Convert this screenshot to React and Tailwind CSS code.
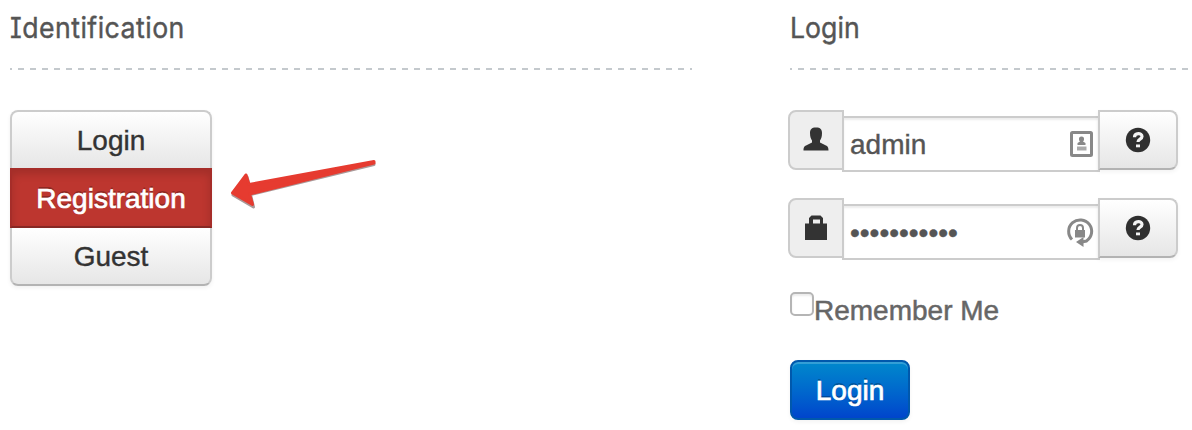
import React, { useState } from "react";

const Heading = ({ children, className, textClass }) => (
  <div className={className}>
    <h3 className="h-[68px] pt-[10px] font-['Inter'] text-[29px] leading-9 text-[#555] [-webkit-text-stroke:0.4px_#555] [font-feature-settings:'cv08']">
      <span className={`inline-block origin-left scale-x-[0.92] ${textClass}`}>
        {children}
      </span>
    </h3>
    <div className="h-[2px] bg-[repeating-linear-gradient(90deg,#c4c9cd_0_6px,transparent_6px_12px)] bg-[position:-4px_0] bg-[length:12px_2px]" />
  </div>
);

const UserIcon = () => (
  <svg width="26" height="28" viewBox="0 0 26 28" fill="#333">
    <path d="M13 1.500c4.500 0 6 2 6 5.500 0 4-1 6-2 7.500v2l5 2.500c2.500 1 3.500 2 3.500 5.500H.5C.5 21 1.500 20 4 19l5-2.500v-2C8 13 7 11 7 7c0-3.500 1.500-5.500 6-5.500z" />
  </svg>
);

const LockIcon = () => (
  <svg width="26" height="28" viewBox="0 0 26 28" fill="#333">
    <path
      d="M2 9.500h4V4l2.500-2.500h9L20 4v5.500h4V26H2zM10 9.500h7V5.500h-7z"
      fillRule="evenodd"
    />
  </svg>
);

const HelpIcon = () => (
  <svg width="26" height="26" viewBox="0 0 26 26">
    <circle cx="13" cy="13" r="12.200" fill="#303030" />
    <path
      d="M9.500 10.200c0-4.700 7.500-4.700 7.500-.700 0 2.800-4 2.500-4 5.500"
      fill="none"
      stroke="#f4f4f4"
      strokeWidth="3.200"
    />
    <path d="M11 17.500h4v2.800h-4z" fill="#f4f4f4" />
  </svg>
);

const CardIcon = () => (
  <svg className="shrink-0" width="24" height="28" viewBox="0 0 24 28">
    <rect x="1.500" y="2.500" width="20" height="23" rx="1" fill="none" stroke="#888" strokeWidth="3" />
    <path
      d="M11.500 6.500c2 0 2.500 1 2.500 2.500s-.5 2-1 2.500l2.500 1.500v2h-8v-2l2.500-1.500c-.5-.5-1-1-1-2.500s.5-2.500 2.500-2.500z"
      fill="#888"
    />
    <path d="M7 16.500h9.500v4H7z" fill="#aaa" />
  </svg>
);

const LockResetIcon = () => (
  <svg className="shrink-0" width="28" height="32" viewBox="0 0 28 32">
    <path d="M6 23.500A11.500 11.500 0 1 1 20.500 25l-5 1" fill="none" stroke="#888" strokeWidth="3" />
    <path d="M10 26l7.500-5v10z" fill="#888" />
    <path d="M9 14h10v7.500H9z" fill="#888" />
    <path d="M11 15v-3c0-4 6-4 6 0v3" fill="none" stroke="#888" strokeWidth="2" />
  </svg>
);

const Arrow = () => (
  <svg className="ml-[18px] mt-[46px]" width="150" height="54" viewBox="0 0 150 54">
    <g strokeLinejoin="round" strokeWidth="3">
      <path d="M144 7.500L19.500 30.500 17 21 3 39l20.500 12-3-12.500L144 8.500z" fill="#a99" stroke="#a99" />
      <path d="M144 5.500L19 28.500 16 19 2.500 37l20 11.500-3-10.500L144 7z" fill="#e63b30" stroke="#e63b30" />
    </g>
  </svg>
);

const Field = ({ icon, hint, type, value, onChange }) => (
  <div className="flex h-[62px] items-start">
    <span className="flex h-[60px] w-14 shrink-0 items-center justify-center rounded-l-lg border-2 border-[#ccc] bg-[#eee]">
      {icon}
    </span>
    <div className="-ml-[2px] mt-[6px] flex h-14 w-[258px] shrink-0 items-center border-2 border-[#ccc] bg-white pl-[6px] pr-1 shadow-[inset_0_2px_2px_rgba(0,0,0,0.075)]">
      <input
        type={type}
        value={value}
        onChange={onChange}
        className="w-full min-w-0 bg-transparent pt-px text-[28px] leading-10 text-[#555] outline-none [-webkit-text-stroke:0.4px_#555]"
      />
      {hint}
    </div>
    <button
      type="button"
      className="-ml-[2px] flex h-[60px] w-20 shrink-0 items-center justify-center rounded-r-lg border-2 border-[#ccc] border-b-[#b3b3b3] bg-linear-to-b from-white to-[#e6e6e6] shadow-[0_2px_4px_rgba(0,0,0,0.05)]"
    >
      <HelpIcon />
    </button>
  </div>
);

export default function App() {
  const [username, setUsername] = useState("admin");
  const [password, setPassword] = useState("password123");

  return (
    <div className="flex h-[430px] w-[1192px] overflow-hidden bg-white font-['Liberation_Sans',sans-serif]">
      <div className="w-[780px] pl-[10px]">
        <Heading className="w-[682px]" textClass="tracking-[0.5px]">
          Identification
        </Heading>
        <div className="flex pt-10">
          <div className="flex h-44 w-[202px] flex-col rounded-lg text-[28px] leading-10 text-[#333] shadow-[0_2px_4px_rgba(0,0,0,0.06)]">
            <button className="h-[58px] rounded-t-lg border-2 border-b-0 border-[#ccc] bg-linear-to-b from-white to-[#e6e6e6] pt-[2px] [-webkit-text-stroke:0.4px_#333]">
              Login
            </button>
            <button className="h-[60px] border-2 border-[#a62d29] border-b-[#872824] bg-[#bd362f] pt-[2px] text-white shadow-[inset_0_4px_8px_rgba(0,0,0,0.15)] [-webkit-text-stroke:0.7px_white] [text-shadow:0_-2px_0_rgba(0,0,0,0.25)]">
              Registration
            </button>
            <button className="h-[58px] rounded-b-lg border-2 border-t-0 border-[#ccc] border-b-[#b3b3b3] bg-linear-to-b from-white to-[#e6e6e6] pt-[2px] [-webkit-text-stroke:0.4px_#333]">
              Guest
            </button>
          </div>
          <Arrow />
        </div>
      </div>

      <div className="w-[412px]">
        <Heading className="ml-[10px] w-[398px]" textClass="tracking-normal">
          Login
        </Heading>
        <form className="flex flex-col pl-2 pt-10">
          <Field
            icon={<UserIcon />}
            hint={<CardIcon />}
            type="text"
            value={username}
            onChange={(e) => setUsername(e.target.value)}
          />
          <div className="mt-[26px]">
            <Field
              icon={<LockIcon />}
              hint={<LockResetIcon />}
              type="password"
              value={password}
              onChange={(e) => setPassword(e.target.value)}
            />
          </div>
          <label className="ml-[2px] mt-8 flex h-9 items-start text-[28px] leading-9 text-[#666]">
            <input
              type="checkbox"
              className="size-6 shrink-0 appearance-none rounded-[5px] border-2 border-[#b5b5b5] bg-white shadow-[inset_0_2px_2px_rgba(0,0,0,0.08)]"
            />
            <span className="pt-px [-webkit-text-stroke:0.5px_#666]">
              Remember Me
            </span>
          </label>
          <button
            type="button"
            className="ml-[2px] mt-8 h-[60px] w-[120px] rounded-lg border-2 border-[#0058ac] bg-linear-to-b from-[#0088cc] to-[#0044cc] pt-[2px] text-[28px] leading-10 text-white shadow-[inset_0_2px_0_rgba(255,255,255,0.2),0_2px_4px_rgba(0,0,0,0.05)] [-webkit-text-stroke:0.7px_white] [text-shadow:0_-2px_0_rgba(0,0,0,0.25)]"
          >
            Login
          </button>
        </form>
      </div>
    </div>
  );
}
